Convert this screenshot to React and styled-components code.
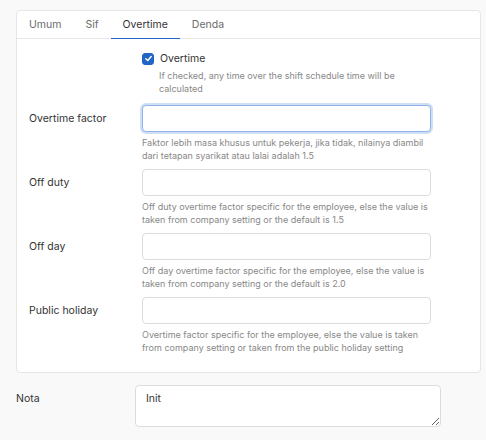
import React, { useState } from 'react';
import styled, { createGlobalStyle } from 'styled-components';

const GlobalStyle = createGlobalStyle`
  html, body {
    margin: 0;
    padding: 0;
    background: #f9f9f9;
  }
  body {
    font-family: Inter, "Noto Sans", sans-serif;
    color: #333;
  }
  * { box-sizing: border-box; }
`;

const tabs = ['Umum', 'Sif', 'Overtime', 'Denda'];

const fields = [
  {
    label: 'Overtime factor',
    help: 'Faktor lebih masa khusus untuk pekerja, jika tidak, nilainya diambil dari tetapan syarikat atau lalai adalah 1.5',
    focused: true,
  },
  {
    label: 'Off duty',
    help: 'Off duty overtime factor specific for the employee, else the value is taken from company setting or the default is 1.5',
  },
  {
    label: 'Off day',
    help: 'Off day overtime factor specific for the employee, else the value is taken from company setting or the default is 2.0',
  },
  {
    label: 'Public holiday',
    help: 'Overtime factor specific for the employee, else the value is taken from company setting or taken from the public holiday setting',
  },
];

const App = () => {
  const [active, setActive] = useState('Overtime');
  const [checked, setChecked] = useState(true);

  return (
    <Page>
      <GlobalStyle />
      <Card>
        <TabBar>
          {tabs.map((t) => (
            <Tab key={t} $active={t === active} onClick={() => setActive(t)}>
              {t}
            </Tab>
          ))}
        </TabBar>
        <CardBody>
          <Row $check>
            <span />
            <div>
              <CheckLine onClick={() => setChecked(!checked)}>
                <CheckBox $checked={checked}>
                  {checked && (
                    <svg width="9" height="9" viewBox="0 0 10 10">
                      <path d="M2 5.2 L4.2 7.2 L8 2.8" fill="none" stroke="#fff" strokeWidth="1.6" strokeLinecap="round" strokeLinejoin="round" />
                    </svg>
                  )}
                </CheckBox>
                <CheckLabel>Overtime</CheckLabel>
              </CheckLine>
              <Help $indent>If checked, any time over the shift schedule time will be calculated</Help>
            </div>
          </Row>
          {fields.map((f) => (
            <Row key={f.label}>
              <Label>{f.label}</Label>
              <div>
                <Input $focused={f.focused} autoFocus={f.focused} />
                <Help>{f.help}</Help>
              </div>
            </Row>
          ))}
        </CardBody>
      </Card>
      <NoteRow>
        <Label>Nota</Label>
        <TextArea defaultValue="Init" />
      </NoteRow>
    </Page>
  );
};

const Page = styled.div`
  padding: 10px 5px 10px 16px;
`;

const Card = styled.div`
  width: 465px;
  background: #ffffff;
  border: 1px solid #e6e6e6;
  border-radius: 4px;
`;

const TabBar = styled.div`
  display: flex;
  height: 28px;
  border-bottom: 1px solid #e6e6eb;
`;

const Tab = styled.div`
  padding: 0 12px;
  height: 28px;
  display: flex;
  align-items: center;
  font-size: 10.5px;
  color: ${(p) => (p.$active ? '#333' : '#6c6c6c')};
  border-bottom: 1px solid ${(p) => (p.$active ? '#2266c4' : 'transparent')};
  cursor: pointer;
`;

const CardBody = styled.div`
  padding: 13px 12px 18px 12px;
  display: flex;
  flex-direction: column;
  gap: 7px;
`;

const Row = styled.div`
  display: grid;
  grid-template-columns: 113px 289px;
  align-items: start;
  margin-bottom: ${(p) => (p.$check ? '3px' : '0')};
`;

const Label = styled.label`
  font-size: 10.5px;
  color: #333;
  line-height: 27px;
`;

const CheckLine = styled.div`
  display: flex;
  align-items: center;
  gap: 6px;
  height: 13px;
  cursor: pointer;
`;

const CheckBox = styled.span`
  width: 12px;
  height: 12px;
  border-radius: 3px;
  display: flex;
  align-items: center;
  justify-content: center;
  background: ${(p) => (p.$checked ? '#2266c4' : '#fff')};
  border: 1px solid ${(p) => (p.$checked ? '#2266c4' : '#bbb')};
`;

const CheckLabel = styled.span`
  font-size: 10.5px;
  color: #333;
`;

const Input = styled.input`
  display: block;
  width: 289px;
  height: 27px;
  border-radius: 4px;
  border: 1px solid ${(p) => (p.$focused ? '#8fb3e6' : '#dcdcdc')};
  box-shadow: ${(p) => (p.$focused ? '0 0 0 2px #cfdff5' : 'none')};
  background: #fff;
  outline: none;
  font-family: inherit;
  font-size: 12px;
  color: #222;
  caret-color: #222;
  padding: 0 8px;
`;

const Help = styled.div`
  margin-top: 4px;
  padding-left: ${(p) => (p.$indent ? '17px' : '0')};
  font-size: 9px;
  line-height: 13px;
  color: #888;
`;

const NoteRow = styled.div`
  display: grid;
  grid-template-columns: 119px 306px;
  margin-top: 12px;
  align-items: start;
`;

const TextArea = styled.textarea`
  display: block;
  width: 306px;
  height: 42px;
  border: 1px solid #dcdcdc;
  border-radius: 4px;
  background: #fff;
  font-family: inherit;
  font-size: 10.5px;
  color: #333;
  padding: 6px 10px;
  outline: none;
`;

export default App;
